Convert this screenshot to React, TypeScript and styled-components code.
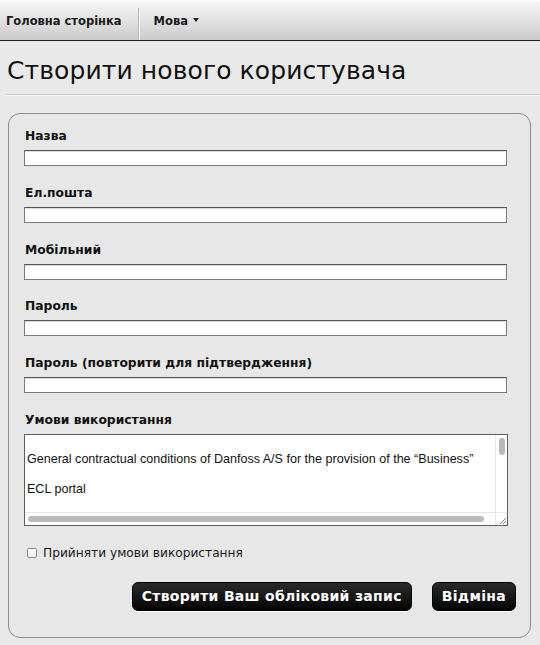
import React from "react";
import styled, { createGlobalStyle } from "styled-components";

const Global = createGlobalStyle`
  html, body { margin: 0; padding: 0; }
  body {
    background: #e9e9e9;
    font-family: "DejaVu Sans", Verdana, sans-serif;
    color: #111;
    width: 540px;
    height: 645px;
    overflow: hidden;
  }
`;

const NavBar = styled.nav`
  height: 38px;
  border-top: 2px solid #fafafa;
  border-bottom: 1px solid #1e1e1e;
  background: linear-gradient(#f4f4f4 0%, #e3e3e3 45%, #cbcbcb 100%);
  display: flex;
  align-items: stretch;
`;

const NavItem = styled.div<{ $divider?: boolean }>`
  display: flex;
  align-items: center;
  padding: 0 16px 0 6px;
  font-size: 11.5px;
  font-weight: bold;
  color: #1a1a1a;
  border-right: ${(p) => (p.$divider ? "1px solid #b9b9b9" : "none")};
  box-shadow: ${(p) => (p.$divider ? "1px 0 0 #f4f4f4" : "none")};
  margin-top: 6px;
  padding-bottom: 6px;
  &:nth-child(2) { padding-left: 15px; }
`;

const Caret = styled.span`
  display: inline-block;
  margin-left: 5px;
  width: 0;
  height: 0;
  border-left: 3.5px solid transparent;
  border-right: 3.5px solid transparent;
  border-top: 4px solid #222;
  transform: translateY(-1px);
`;

const Header = styled.div`
  margin-left: 7px;
  padding-top: 13px;
  padding-bottom: 6px;
  border-bottom: 1px solid #c8c8c8;
  box-shadow: 0 1px 0 #f8f8f8;
`;

const Title = styled.h1`
  margin: 0;
  font-size: 25px;
  font-weight: normal;
  line-height: 34px;
  color: #111;
  letter-spacing: 0.1px;
`;

const Panel = styled.form`
  margin: 18px 9px 0 8px;
  height: 525px;
  box-sizing: border-box;
  border: 1px solid #8c8c8c;
  border-radius: 12px;
  background: #e7e7e7;
  padding: 15px 0 0 15px;
  display: flex;
  flex-direction: column;
`;

const Field = styled.div`
  display: flex;
  flex-direction: column;
  margin-bottom: 19.75px;
`;

const Label = styled.label`
  font-size: 12.3px;
  font-weight: bold;
  color: #111;
  line-height: 15px;
  margin-bottom: 6px;
  padding-left: 1px;
`;

const Input = styled.div`
  width: 483px;
  height: 16px;
  box-sizing: border-box;
  background: #fff;
  border: 1px solid #7a7a7a;
  border-top-color: #555;
  box-shadow: inset 0 1px 0 #ddd;
`;

const TextBox = styled.div`
  width: 484px;
  height: 92px;
  box-sizing: border-box;
  background: #fff;
  border: 1px solid #5e5e5e;
  display: grid;
  grid-template-columns: 1fr 12px;
  grid-template-rows: 1fr 13px;
`;

const TextContent = styled.div`
  font-family: "Liberation Sans", Arial, sans-serif;
  font-size: 12.55px;
  color: #111;
  padding: 17px 0 0 2px;
  line-height: 15px;
  overflow: hidden;
  white-space: nowrap;
  p { margin: 0 0 15px 0; }
`;

const VTrack = styled.div`
  border-left: 1px solid #e6e6e6;
  display: flex;
  justify-content: center;
  padding-top: 3px;
`;

const VThumb = styled.div`
  width: 6px;
  height: 17px;
  border-radius: 3px;
  background: #b9b9b9;
`;

const HTrack = styled.div`
  border-top: 1px solid #e6e6e6;
  display: flex;
  align-items: center;
  padding-left: 3px;
`;

const HThumb = styled.div`
  width: 456px;
  height: 6px;
  border-radius: 3px;
  background: #bcbcbc;
`;

const Corner = styled.div`
  border-top: 1px solid #e6e6e6;
  border-left: 1px solid #e6e6e6;
  display: flex;
  align-items: flex-end;
  justify-content: flex-end;
`;

const CheckRow = styled.label`
  display: flex;
  align-items: center;
  margin-top: 0px;
  padding-left: 3px;
  font-size: 12.2px;
  color: #1a1a1a;
`;

const Box = styled.span`
  width: 10px;
  height: 10px;
  box-sizing: border-box;
  border: 1px solid #8a8a8a;
  border-radius: 2px;
  background: linear-gradient(#fff, #ececec);
  margin-right: 6px;
`;

const Actions = styled.div`
  display: flex;
  justify-content: flex-end;
  gap: 20px;
  margin-top: 22px;
  padding-right: 14px;
`;

const Button = styled.button`
  height: 29px;
  border: 1px solid #000;
  border-radius: 6px;
  background: linear-gradient(#2a2a2a, #050505);
  color: #fff;
  font-family: "DejaVu Sans", Verdana, sans-serif;
  font-weight: bold;
  font-size: 14px;
  padding: 0 9px;
  letter-spacing: 0.3px;
  box-shadow: 0 1px 0 #fff;
`;

const fields = [
  "Назва",
  "Ел.пошта",
  "Мобільний",
  "Пароль",
  "Пароль (повторити для підтвердження)",
];

export default function App() {
  return (
    <>
      <Global />
      <NavBar>
        <NavItem $divider>Головна сторінка</NavItem>
        <NavItem>
          Мова<Caret />
        </NavItem>
      </NavBar>
      <Header>
        <Title>Створити нового користувача</Title>
      </Header>
      <Panel>
        {fields.map((f) => (
          <Field key={f}>
            <Label>{f}</Label>
            <Input />
          </Field>
        ))}
        <Field>
          <Label>Умови використання</Label>
          <TextBox>
            <TextContent>
              <p>General contractual conditions of Danfoss A/S for the provision of the “Business”</p>
              <p>ECL portal</p>
            </TextContent>
            <VTrack>
              <VThumb />
            </VTrack>
            <HTrack>
              <HThumb />
            </HTrack>
            <Corner>
              <svg width="9" height="9" viewBox="0 0 9 9">
                <path d="M8 2 L2 8 M8 5 L5 8" stroke="#888" strokeWidth="1" />
              </svg>
            </Corner>
          </TextBox>
        </Field>
        <CheckRow>
          <Box />
          Прийняти умови використання
        </CheckRow>
        <Actions>
          <Button type="button">Створити Ваш обліковий запис</Button>
          <Button type="button">Відміна</Button>
        </Actions>
      </Panel>
    </>
  );
}
